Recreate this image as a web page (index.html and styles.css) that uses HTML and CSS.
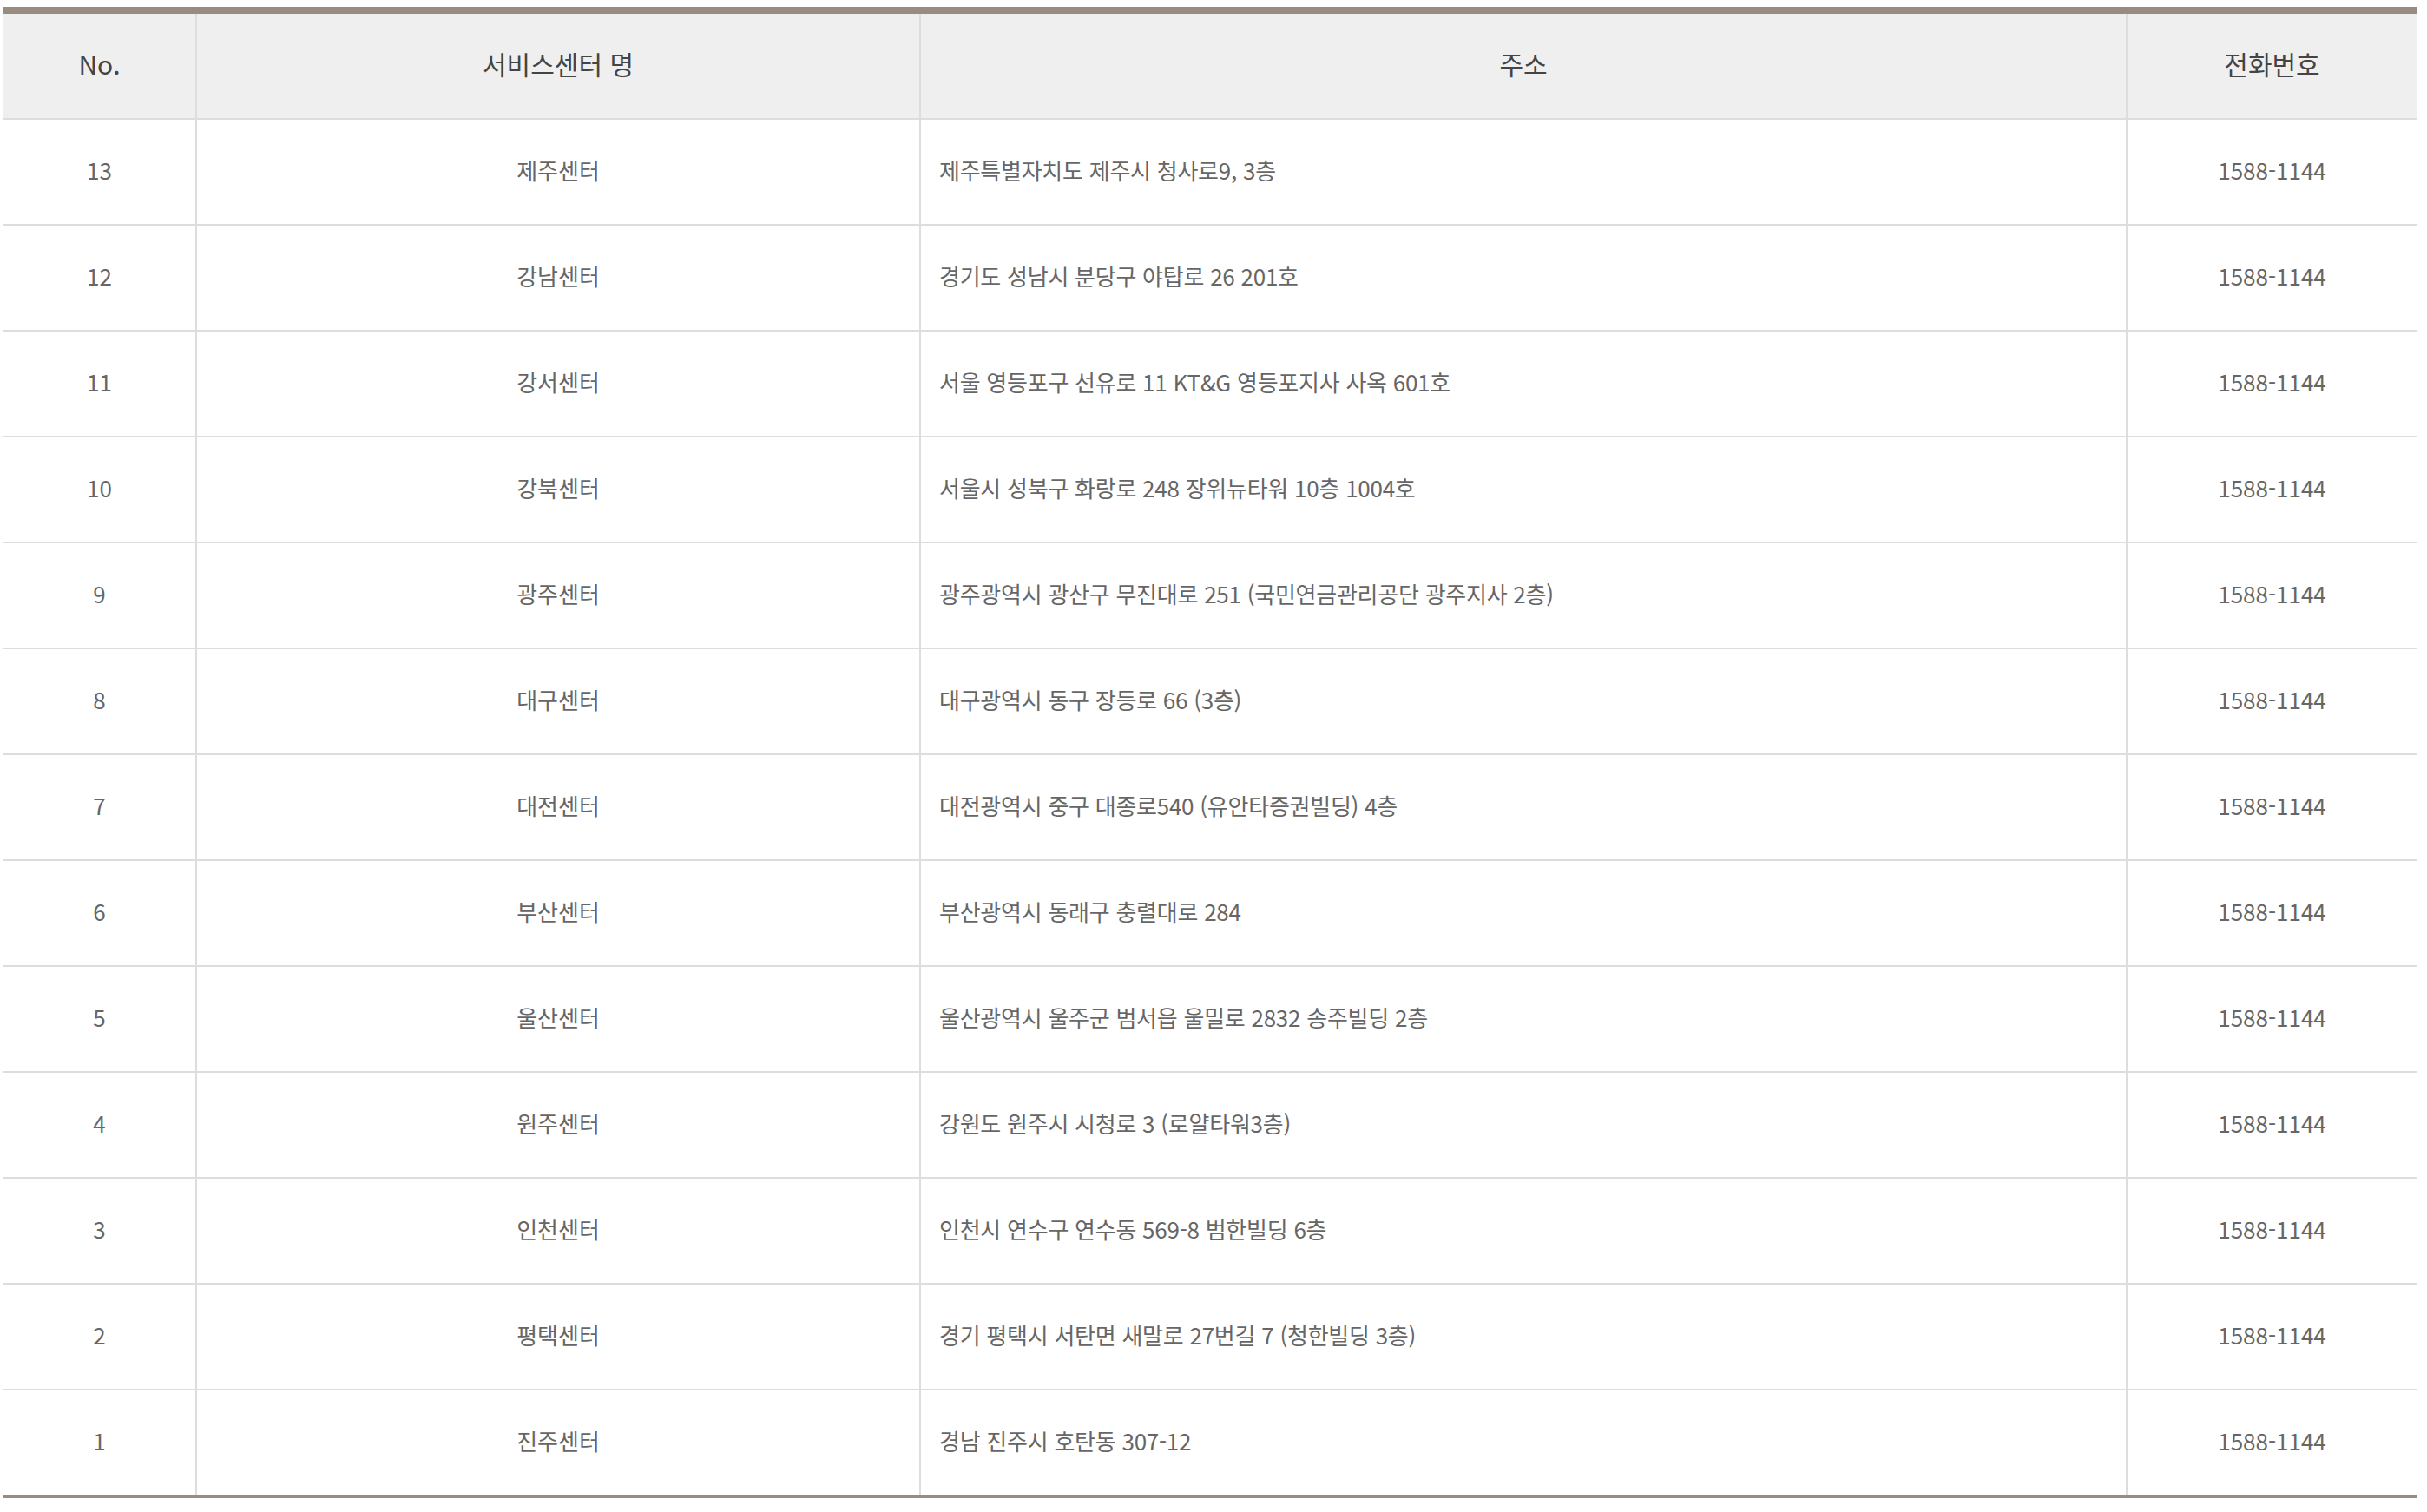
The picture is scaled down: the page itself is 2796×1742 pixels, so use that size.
FILE: index.html
```html
<!DOCTYPE html>
<html lang="ko">
<head>
<meta charset="utf-8">
<title>서비스센터 안내</title>
<link rel="stylesheet" href="styles.css">
</head>
<body>
<table class="center-table">
  <colgroup>
    <col class="col-no">
    <col class="col-name">
    <col class="col-addr">
    <col class="col-tel">
  </colgroup>
  <thead>
    <tr>
      <th>No.</th>
      <th>서비스센터 명</th>
      <th>주소</th>
      <th class="last">전화번호</th>
    </tr>
  </thead>
  <tbody>
    <tr><td>13</td><td>제주센터</td><td class="addr">제주특별자치도 제주시 청사로9, 3층</td><td class="last">1588-1144</td></tr>
    <tr><td>12</td><td>강남센터</td><td class="addr">경기도 성남시 분당구 야탑로 26 201호</td><td class="last">1588-1144</td></tr>
    <tr><td>11</td><td>강서센터</td><td class="addr">서울 영등포구 선유로 11 KT&amp;G 영등포지사 사옥 601호</td><td class="last">1588-1144</td></tr>
    <tr><td>10</td><td>강북센터</td><td class="addr">서울시 성북구 화랑로 248 장위뉴타워 10층 1004호</td><td class="last">1588-1144</td></tr>
    <tr><td>9</td><td>광주센터</td><td class="addr">광주광역시 광산구 무진대로 251 (국민연금관리공단 광주지사 2층)</td><td class="last">1588-1144</td></tr>
    <tr><td>8</td><td>대구센터</td><td class="addr">대구광역시 동구 장등로 66 (3층)</td><td class="last">1588-1144</td></tr>
    <tr><td>7</td><td>대전센터</td><td class="addr">대전광역시 중구 대종로540 (유안타증권빌딩) 4층</td><td class="last">1588-1144</td></tr>
    <tr><td>6</td><td>부산센터</td><td class="addr">부산광역시 동래구 충렬대로 284</td><td class="last">1588-1144</td></tr>
    <tr><td>5</td><td>울산센터</td><td class="addr">울산광역시 울주군 범서읍 울밀로 2832 송주빌딩 2층</td><td class="last">1588-1144</td></tr>
    <tr><td>4</td><td>원주센터</td><td class="addr">강원도 원주시 시청로 3 (로얄타워3층)</td><td class="last">1588-1144</td></tr>
    <tr><td>3</td><td>인천센터</td><td class="addr">인천시 연수구 연수동 569-8 범한빌딩 6층</td><td class="last">1588-1144</td></tr>
    <tr><td>2</td><td>평택센터</td><td class="addr">경기 평택시 서탄면 새말로 27번길 7 (청한빌딩 3층)</td><td class="last">1588-1144</td></tr>
    <tr class="final"><td>1</td><td>진주센터</td><td class="addr">경남 진주시 호탄동 307-12</td><td class="last">1588-1144</td></tr>
  </tbody>
</table>
</body>
</html>
```

FILE: styles.css
```css
html, body {
  margin: 0;
  padding: 0;
  background: #ffffff;
}

body {
  padding: 8px 0 0 4px;
  font-family: "Noto Sans CJK KR", "Noto Sans", sans-serif;
}

.center-table {
  width: 2780px;
  table-layout: fixed;
  border-collapse: separate;
  border-spacing: 0;
  border-top: 8px solid #988c81;
  border-bottom: 4px solid #988c81;
}

.col-no { width: 223px; }
.col-name { width: 834px; }
.col-addr { width: 1390px; }
.col-tel { width: 333px; }

.center-table th,
.center-table td {
  box-sizing: border-box;
  height: 122px;
  padding: 0 0 5px 0;
  border-right: 2px solid #dddddd;
  border-bottom: 2px solid #dddddd;
  text-align: center;
  vertical-align: middle;
}

.center-table th {
  padding-bottom: 6px;
  background: #efefef;
  color: #444444;
  font-size: 30px;
  font-weight: 400;
}

.center-table td {
  color: #666666;
  font-size: 26px;
  font-weight: 400;
}

.center-table td.addr {
  text-align: left;
  padding-left: 21px;
  letter-spacing: -0.25px;
}

.center-table th.last,
.center-table td.last {
  border-right: 0;
}

.center-table tr.final td {
  height: 120px;
  border-bottom: 0;
}
```
